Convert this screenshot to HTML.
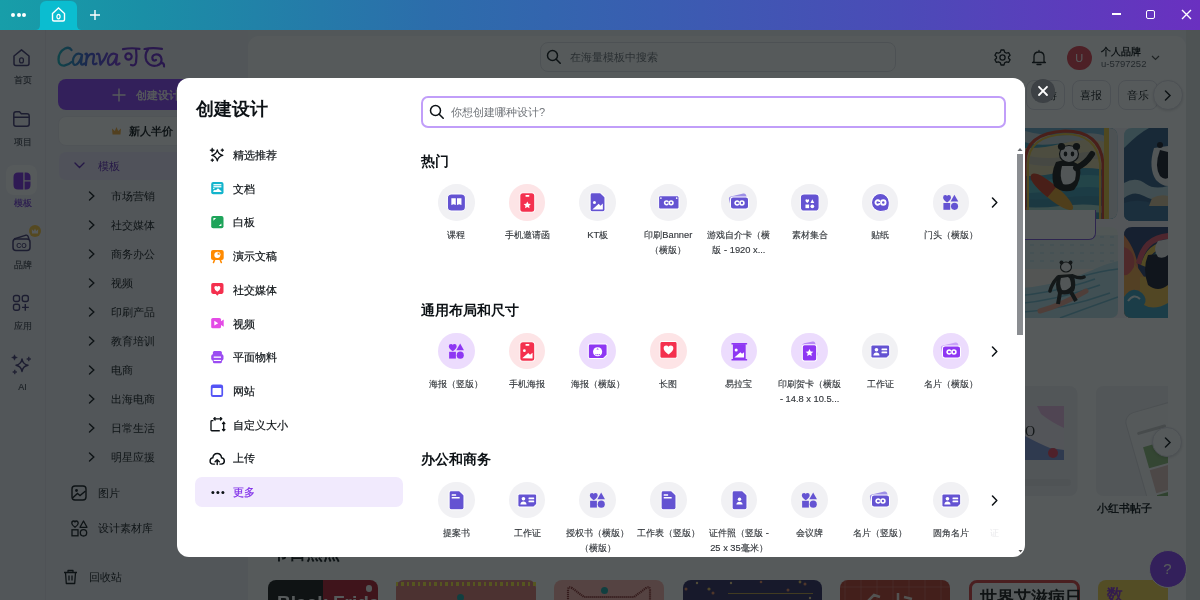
<!DOCTYPE html>
<html><head><meta charset="utf-8"><style>
*{box-sizing:border-box;margin:0;padding:0}
html,body{width:1200px;height:600px;overflow:hidden;background:#f4f4f7;font-family:"Liberation Sans",sans-serif;color:#0d1216}
.abs{position:absolute}
#titlebar{will-change:transform;position:absolute;left:0;top:0;width:1200px;height:30px;background:linear-gradient(90deg,#179ea9 0%,#1a8fa6 12%,#2c6dab 36%,#3a5db1 55%,#4b4bb7 75%,#6a30c0 100%)}
#app{will-change:transform;position:absolute;left:0;top:30px;width:1200px;height:570px;background:#f2f3f7;overflow:hidden}
#overlay{position:absolute;left:0;top:30px;width:1200px;height:570px;background:rgba(14,20,21,0.7)}
#modal{will-change:transform;position:absolute;left:177px;top:78px;width:848px;height:479px;background:#fff;border-radius:12px;overflow:hidden}
.title{font-size:18px;font-weight:bold;line-height:24px;white-space:nowrap}
.navt{font-size:11px;line-height:16px;white-space:nowrap;-webkit-text-stroke:0.2px currentColor}
.ph{font-size:11px;line-height:16px;color:#707479;white-space:nowrap}
.sec{font-size:14px;font-weight:bold;line-height:16px;white-space:nowrap}
.circ{width:36.4px;height:36.4px;border-radius:50%}
.circ svg{position:absolute;left:0;top:0}
.rl{position:absolute;left:0;width:45px;text-align:center;font-size:9px;line-height:14px;color:#3d404c;-webkit-text-stroke:0.15px currentColor}
.lab{width:70px;text-align:center;font-size:9.3px;line-height:15.5px;color:#34383d;-webkit-text-stroke:0.15px currentColor}
</style></head><body>
<div id="titlebar">
 <div class="abs" style="left:11px;top:13px;width:4px;height:4px;border-radius:50%;background:#fff"></div>
 <div class="abs" style="left:16.5px;top:13px;width:4px;height:4px;border-radius:50%;background:#fff"></div>
 <div class="abs" style="left:22px;top:13px;width:4px;height:4px;border-radius:50%;background:#fff"></div>
 <div class="abs" style="left:40px;top:1px;width:37px;height:29px;background:#0bbdd0;border-radius:6px 6px 0 0"></div>
 <svg class="abs" style="left:35px;top:25px" width="47" height="5" viewBox="0 0 47 5"><path d="M0 5 Q5 5 5 0 V5 Z M47 5 Q42 5 42 0 V5 Z" fill="#0bbdd0"/></svg>
 <svg class="abs" style="left:50px;top:6px" width="17" height="17" viewBox="0 0 17 17"><path d="M2.5 7.5 L8.5 2 L14.5 7.5 V13.5 Q14.5 15 13 15 H4 Q2.5 15 2.5 13.5 Z" fill="none" stroke="#fff" stroke-width="1.4"/><ellipse cx="8.5" cy="10.6" rx="1.6" ry="2.2" fill="none" stroke="#fff" stroke-width="1.2"/></svg>
 <svg class="abs" style="left:89px;top:9px" width="12" height="12" viewBox="0 0 12 12"><path d="M6 1V11M1 6H11" stroke="#fff" stroke-width="1.4"/></svg>
 <div class="abs" style="left:1112px;top:13px;width:9px;height:1.5px;background:#fff"></div>
 <div class="abs" style="left:1146px;top:10px;width:9px;height:9px;border:1.5px solid #fff;border-radius:2px"></div>
 <svg class="abs" style="left:1181px;top:9px" width="11" height="11" viewBox="0 0 11 11"><path d="M1 1L10 10M10 1L1 10" stroke="#fff" stroke-width="1.4"/></svg>
</div>
<div id="app"><div class="abs" style="left:0;top:0;width:45px;height:570px;background:#f1f0f8"></div>
<div class="abs" style="left:45px;top:0;width:1px;height:570px;background:#e6e4ee"></div>
<svg class="abs" style="left:12px;top:18px" width="19" height="19" viewBox="0 0 19 19"><path d="M2 8 L9.5 1.8 L17 8 V15.5 Q17 17.5 15 17.5 H4 Q2 17.5 2 15.5 Z" fill="none" stroke="#3f3470" stroke-width="1.5" stroke-linejoin="round"/><rect x="7.6" y="9.8" width="3.8" height="5" rx="1.9" fill="none" stroke="#3f3470" stroke-width="1.3"/></svg>
<div class="abs rl" style="top:43px">首页</div>
<svg class="abs" style="left:12px;top:80px" width="19" height="18" viewBox="0 0 19 18"><path d="M1.8 4 Q1.8 1.8 4 1.8 H7.5 L9.3 3.8 H15 Q17.2 3.8 17.2 6 V14 Q17.2 16.2 15 16.2 H4 Q1.8 16.2 1.8 14 Z M1.8 7.3 H17.2" fill="none" stroke="#3f3470" stroke-width="1.5" stroke-linejoin="round"/></svg>
<div class="abs rl" style="top:105px">项目</div>
<div class="abs" style="left:6px;top:134.5px;width:31px;height:30px;border-radius:8px;background:#ffffff"></div>
<svg class="abs" style="left:13px;top:142px" width="18" height="18" viewBox="0 0 18 18"><path d="M5 0.5 H10.3 V17.5 H5 Q0.5 17.5 0.5 13 V5 Q0.5 0.5 5 0.5 Z M11.6 0.5 H13 Q17.5 0.5 17.5 5 V8.3 H11.6 Z M11.6 9.6 H17.5 V13 Q17.5 17.5 13 17.5 H11.6 Z" fill="#7d2ae8"/></svg>
<div class="abs rl" style="top:166px;color:#6b2bd6">模板</div>
<svg class="abs" style="left:11px;top:202px" width="21" height="20" viewBox="0 0 21 20"><path d="M3 7 L15 3.2 Q16.5 2.8 17 4.2 L18 7" fill="none" stroke="#3f3470" stroke-width="1.4"/><rect x="2" y="7" width="17" height="11.5" rx="3" fill="none" stroke="#3f3470" stroke-width="1.5"/><text x="10.5" y="15.8" font-size="7" font-weight="bold" text-anchor="middle" fill="#3f3470" font-family="Liberation Sans">CO</text></svg>
<div class="abs" style="left:29px;top:195px;width:12px;height:12px;border-radius:50%;background:#fbc53b"></div>
<svg class="abs" style="left:31px;top:197px" width="8" height="8" viewBox="0 0 8 8"><path d="M1 6.5 L0.8 2.3 L2.8 4 L4 1.5 L5.2 4 L7.2 2.3 L7 6.5 Z" fill="#fff"/></svg>
<div class="abs rl" style="top:228px">品牌</div>
<svg class="abs" style="left:12px;top:264px" width="18" height="18" viewBox="0 0 18 18"><rect x="1.5" y="1.5" width="6" height="6" rx="2" fill="none" stroke="#3f3470" stroke-width="1.4"/><rect x="10.3" y="1.5" width="6" height="6" rx="2" fill="none" stroke="#3f3470" stroke-width="1.4"/><rect x="1.5" y="10.3" width="6" height="6" rx="2" fill="none" stroke="#3f3470" stroke-width="1.4"/><path d="M13.3 10 V16.8 M10 13.4 H16.8" stroke="#3f3470" stroke-width="1.4"/></svg>
<div class="abs rl" style="top:289px">应用</div>
<svg class="abs" style="left:11px;top:324px" width="21" height="21" viewBox="0 0 21 21"><path d="M11 5 Q11.8 10.2 17 11.2 Q11.8 12.2 11 17.5 Q10.2 12.2 5 11.2 Q10.2 10.2 11 5 Z" fill="none" stroke="#3f3470" stroke-width="1.5" stroke-linejoin="round"/><path d="M3.5 0.8 L4.3 2.8 L6.3 3.5 L4.3 4.2 L3.5 6.2 L2.7 4.2 L0.7 3.5 L2.7 2.8 Z M17.8 2.8 L18.4 4.4 L20 5 L18.4 5.6 L17.8 7.2 L17.2 5.6 L15.6 5 L17.2 4.4 Z M3.8 15.8 L4.4 17.4 L6 18 L4.4 18.6 L3.8 20.2 L3.2 18.6 L1.6 18 L3.2 17.4 Z" fill="#3f3470" stroke="#3f3470" stroke-width="0.6" stroke-linejoin="round"/></svg>
<div class="abs rl" style="top:350px">AI</div>
<div class="abs" style="left:46px;top:0;width:202px;height:570px;background:#f1f0f8"></div>
<svg class="abs" style="left:56px;top:13px" width="114" height="28" viewBox="0 0 114 28"><defs><linearGradient id="lg" gradientUnits="userSpaceOnUse" x1="2" y1="0" x2="64" y2="0"><stop offset="0" stop-color="#12b5c0"/><stop offset="0.5" stop-color="#3a52d4"/><stop offset="1" stop-color="#7a2fe0"/></linearGradient></defs>
<g fill="none" stroke="url(#lg)" stroke-width="2.3" stroke-linecap="round" stroke-linejoin="round">
<path d="M15.5 7 Q13.5 3.5 9 5.5 Q2.5 9 2.5 16.5 Q2.5 23 8.5 22.5 Q12.5 22 15.5 19"/>
<path d="M26 12 Q23 9.5 20 11.5 Q16.5 14.5 17 19.5 Q17.7 22.8 20.5 21.5 Q24 19.5 26 12 L25 20 Q25 23 28.5 20.5"/>
<path d="M29.5 11 Q31 10 31 12 L29.8 22 M30.5 16.5 Q32.5 11 36 10.8 Q38.5 10.8 37.8 14 L37 19 Q36.8 22.5 40.5 20.5"/>
<path d="M41 11 Q43 10 43.3 12.5 L44.5 21.5 Q49 16 51 10.5"/>
<path d="M61 12 Q58 9.5 55 11.5 Q51.5 14.5 52 19.5 Q52.7 22.8 55.5 21.5 Q59 19.5 61 12 L60 20 Q60 23 63.5 20.5"/>
</g>
<g fill="none" stroke="#6a24d0" stroke-width="2.2" stroke-linecap="round">
<path d="M67 6.2 Q75 4.5 83.5 5.8 M80 6 Q81 13 80 19.5 Q79 23.5 75 22"/>
<circle cx="72.5" cy="13.5" r="3.2"/>
<path d="M88.5 6 Q96 4.5 106 5.8 M92 6.5 Q88 12 90.5 18 Q94 24 101 22.5 Q106 21 105.5 16 Q104.5 11 99.5 11.5 Q95.5 12.5 96.5 16 Q97.5 18.5 100 17 M104.5 20 Q108.5 19.5 108 23.5"/>
</g></svg>
<div class="abs" style="left:58px;top:49px;width:178px;height:31px;border-radius:8px;background:#8b3dff"></div>
<svg class="abs" style="left:112px;top:58px" width="14" height="14" viewBox="0 0 14 14"><path d="M7 0.5 V13.5 M0.5 7 H13.5" stroke="#fff" stroke-width="1.4"/></svg>
<div class="abs" style="left:135.5px;top:57px;font-size:11px;line-height:16px;-webkit-text-stroke:0.35px #fff;color:#fff;white-space:nowrap">创建设计</div>
<div class="abs" style="left:58px;top:86px;width:178px;height:30px;border-radius:8px;background:#fefeff;border:1px solid #ecebf2"></div>
<svg class="abs" style="left:111px;top:96px" width="11" height="10" viewBox="0 0 11 10"><path d="M1.5 8.5 L1 2.5 L3.8 5 L5.5 1 L7.2 5 L10 2.5 L9.5 8.5 Z" fill="#f2a93b"/></svg>
<div class="abs" style="left:129px;top:93px;font-size:11px;line-height:16px;font-weight:bold;color:#0d1216;white-space:nowrap">新人半价</div>
<div class="abs" style="left:59px;top:122px;width:177px;height:28px;border-radius:7px;background:#ebe5fb"></div>
<svg class="abs" style="left:74px;top:132px" width="11" height="7" viewBox="0 0 11 7"><path d="M1 1 L5.5 5.5 L10 1" fill="none" stroke="#5d22b8" stroke-width="1.4" stroke-linecap="round"/></svg>
<div class="abs" style="left:98px;top:128px;font-size:11px;line-height:16px;color:#5d22b8;white-space:nowrap">模板</div>
<svg class="abs" style="left:88px;top:160.6px" width="8" height="10" viewBox="0 0 8 10"><path d="M1.5 1 L5.8 5 L1.5 9" fill="none" stroke="#0d1216" stroke-width="1.4" stroke-linecap="round"/></svg>
<div class="abs" style="left:110.5px;top:157.6px;font-size:11px;line-height:16px;color:#0d1216;white-space:nowrap">市场营销</div>
<svg class="abs" style="left:88px;top:189.7px" width="8" height="10" viewBox="0 0 8 10"><path d="M1.5 1 L5.8 5 L1.5 9" fill="none" stroke="#0d1216" stroke-width="1.4" stroke-linecap="round"/></svg>
<div class="abs" style="left:110.5px;top:186.7px;font-size:11px;line-height:16px;color:#0d1216;white-space:nowrap">社交媒体</div>
<svg class="abs" style="left:88px;top:218.7px" width="8" height="10" viewBox="0 0 8 10"><path d="M1.5 1 L5.8 5 L1.5 9" fill="none" stroke="#0d1216" stroke-width="1.4" stroke-linecap="round"/></svg>
<div class="abs" style="left:110.5px;top:215.7px;font-size:11px;line-height:16px;color:#0d1216;white-space:nowrap">商务办公</div>
<svg class="abs" style="left:88px;top:247.8px" width="8" height="10" viewBox="0 0 8 10"><path d="M1.5 1 L5.8 5 L1.5 9" fill="none" stroke="#0d1216" stroke-width="1.4" stroke-linecap="round"/></svg>
<div class="abs" style="left:110.5px;top:244.8px;font-size:11px;line-height:16px;color:#0d1216;white-space:nowrap">视频</div>
<svg class="abs" style="left:88px;top:276.9px" width="8" height="10" viewBox="0 0 8 10"><path d="M1.5 1 L5.8 5 L1.5 9" fill="none" stroke="#0d1216" stroke-width="1.4" stroke-linecap="round"/></svg>
<div class="abs" style="left:110.5px;top:273.9px;font-size:11px;line-height:16px;color:#0d1216;white-space:nowrap">印刷产品</div>
<svg class="abs" style="left:88px;top:305.9px" width="8" height="10" viewBox="0 0 8 10"><path d="M1.5 1 L5.8 5 L1.5 9" fill="none" stroke="#0d1216" stroke-width="1.4" stroke-linecap="round"/></svg>
<div class="abs" style="left:110.5px;top:302.9px;font-size:11px;line-height:16px;color:#0d1216;white-space:nowrap">教育培训</div>
<svg class="abs" style="left:88px;top:335.0px" width="8" height="10" viewBox="0 0 8 10"><path d="M1.5 1 L5.8 5 L1.5 9" fill="none" stroke="#0d1216" stroke-width="1.4" stroke-linecap="round"/></svg>
<div class="abs" style="left:110.5px;top:332.0px;font-size:11px;line-height:16px;color:#0d1216;white-space:nowrap">电商</div>
<svg class="abs" style="left:88px;top:364.1px" width="8" height="10" viewBox="0 0 8 10"><path d="M1.5 1 L5.8 5 L1.5 9" fill="none" stroke="#0d1216" stroke-width="1.4" stroke-linecap="round"/></svg>
<div class="abs" style="left:110.5px;top:361.1px;font-size:11px;line-height:16px;color:#0d1216;white-space:nowrap">出海电商</div>
<svg class="abs" style="left:88px;top:393.2px" width="8" height="10" viewBox="0 0 8 10"><path d="M1.5 1 L5.8 5 L1.5 9" fill="none" stroke="#0d1216" stroke-width="1.4" stroke-linecap="round"/></svg>
<div class="abs" style="left:110.5px;top:390.2px;font-size:11px;line-height:16px;color:#0d1216;white-space:nowrap">日常生活</div>
<svg class="abs" style="left:88px;top:422.2px" width="8" height="10" viewBox="0 0 8 10"><path d="M1.5 1 L5.8 5 L1.5 9" fill="none" stroke="#0d1216" stroke-width="1.4" stroke-linecap="round"/></svg>
<div class="abs" style="left:110.5px;top:419.2px;font-size:11px;line-height:16px;color:#0d1216;white-space:nowrap">明星应援</div>
<svg class="abs" style="left:71px;top:455px" width="16" height="16" viewBox="0 0 16 16"><rect x="1" y="1" width="14" height="14" rx="3" fill="none" stroke="#0d1216" stroke-width="1.4"/><circle cx="5.5" cy="5.5" r="1.4" fill="#0d1216"/><path d="M1.5 13 L6.5 8.5 L9 10.5 L14.5 6" fill="none" stroke="#0d1216" stroke-width="1.4"/></svg>
<div class="abs" style="left:98px;top:455px;font-size:11px;line-height:16px;color:#0d1216">图片</div>
<svg class="abs" style="left:71px;top:490px" width="17" height="17" viewBox="0 0 17 17"><path d="M4 7.3 Q0.8 5 0.8 3.2 Q0.8 1 2.6 1 Q3.7 1 4 2 Q4.3 1 5.4 1 Q7.2 1 7.2 3.2 Q7.2 5 4 7.3 Z M12.5 1 L16 7.3 H9 Z" fill="none" stroke="#0d1216" stroke-width="1.3" stroke-linejoin="round"/><rect x="1" y="9.8" width="6" height="6" fill="none" stroke="#0d1216" stroke-width="1.3"/><circle cx="12.5" cy="12.8" r="3.2" fill="none" stroke="#0d1216" stroke-width="1.3"/></svg>
<div class="abs" style="left:98px;top:490px;font-size:11px;line-height:16px;color:#0d1216">设计素材库</div>
<svg class="abs" style="left:63px;top:539px" width="15" height="16" viewBox="0 0 15 16"><path d="M1 3.5 H14 M5 3.5 V1.5 H10 V3.5 M2.5 3.5 L3.3 14.5 H11.7 L12.5 3.5 M6 6.5 V11.5 M9 6.5 V11.5" fill="none" stroke="#0d1216" stroke-width="1.3" stroke-linejoin="round"/></svg>
<div class="abs" style="left:89px;top:539px;font-size:11px;line-height:16px;color:#0d1216">回收站</div>
<div class="abs" style="left:248px;top:6px;width:938px;height:600px;background:#fff;border-radius:11px 11px 0 0"></div>
<div class="abs" style="left:1186px;top:0;width:14px;height:570px;background:#e4e6e8"></div>
<div class="abs" style="left:540px;top:12px;width:356px;height:30px;border-radius:8px;background:#fff;border:1px solid #e2e2e7"></div>
<svg class="abs" style="left:546px;top:19px" width="16" height="16" viewBox="0 0 16 16"><circle cx="6.5" cy="6.5" r="5" fill="none" stroke="#0d1216" stroke-width="1.5"/><path d="M10.2 10.2 L14.2 14.2" stroke="#0d1216" stroke-width="1.6" stroke-linecap="round"/></svg>
<div class="abs" style="left:570px;top:19px;font-size:11px;line-height:16px;color:#6b6f76;white-space:nowrap">在海量模板中搜索</div>
<svg class="abs" style="left:994px;top:19px" width="17" height="17" viewBox="0 0 17 17"><path d="M7 1 H10 L10.6 3.1 L12.5 4.2 L14.6 3.6 L16.1 6.2 L14.5 7.7 V9.3 L16.1 10.8 L14.6 13.4 L12.5 12.8 L10.6 13.9 L10 16 H7 L6.4 13.9 L4.5 12.8 L2.4 13.4 L0.9 10.8 L2.5 9.3 V7.7 L0.9 6.2 L2.4 3.6 L4.5 4.2 L6.4 3.1 Z" fill="none" stroke="#0d1216" stroke-width="1.3" stroke-linejoin="round"/><circle cx="8.5" cy="8.5" r="2.6" fill="none" stroke="#0d1216" stroke-width="1.3"/></svg>
<svg class="abs" style="left:1031px;top:19px" width="16" height="17" viewBox="0 0 16 17"><path d="M8 1.5 V2.5 M3 12.5 V7.5 Q3 3 8 3 Q13 3 13 7.5 V12.5 L14.5 13.5 H1.5 Z M6 15.5 H10" fill="none" stroke="#0d1216" stroke-width="1.3" stroke-linejoin="round" stroke-linecap="round"/></svg>
<div class="abs" style="left:1067px;top:15.5px;width:24.5px;height:24.5px;border-radius:50%;background:#e23d4e"></div>
<div class="abs" style="left:1067px;top:20px;width:24.5px;text-align:center;font-size:11px;line-height:16px;color:#fff">U</div>
<div class="abs" style="left:1101px;top:14.5px;font-size:9.5px;line-height:14px;font-weight:bold;color:#0d1216;white-space:nowrap">个人品牌</div>
<div class="abs" style="left:1101px;top:27px;font-size:9.5px;line-height:14px;color:#555a62;white-space:nowrap">u-5797252</div>
<svg class="abs" style="left:1151px;top:25px" width="9" height="6" viewBox="0 0 9 6"><path d="M1 1 L4.5 4.5 L8 1" fill="none" stroke="#444" stroke-width="1.2"/></svg>
<div class="abs" style="left:270px;top:49.5px;width:39px;height:30px;border-radius:8px;border:1px solid #dedde6;background:#fff"></div>
<div class="abs" style="left:270px;top:56.5px;width:39px;text-align:center;font-size:11px;line-height:16px;color:#0d1216">滑板</div>
<div class="abs" style="left:316px;top:49.5px;width:39px;height:30px;border-radius:8px;border:1px solid #dedde6;background:#fff"></div>
<div class="abs" style="left:316px;top:56.5px;width:39px;text-align:center;font-size:11px;line-height:16px;color:#0d1216">动漫</div>
<div class="abs" style="left:1026px;top:49.5px;width:39px;height:30px;border-radius:8px;border:1px solid #dedde6;background:#fff"></div>
<div class="abs" style="left:1026px;top:56.5px;width:39px;text-align:center;font-size:11px;line-height:16px;color:#0d1216">旅游</div>
<div class="abs" style="left:1071.5px;top:49.5px;width:39.5px;height:30px;border-radius:8px;border:1px solid #dedde6;background:#fff"></div>
<div class="abs" style="left:1071.5px;top:56.5px;width:39.5px;text-align:center;font-size:11px;line-height:16px;color:#0d1216">喜报</div>
<div class="abs" style="left:1118px;top:49.5px;width:39.5px;height:30px;border-radius:8px;border:1px solid #dedde6;background:#fff"></div>
<div class="abs" style="left:1118px;top:56.5px;width:39.5px;text-align:center;font-size:11px;line-height:16px;color:#0d1216">音乐</div>
<div class="abs" style="left:1152.5px;top:49.5px;width:30px;height:30px;border-radius:50%;background:#fff;border:1px solid #dedde6;box-shadow:0 1px 3px rgba(0,0,0,0.15)"></div>
<svg class="abs" style="left:1164px;top:60px" width="8" height="11" viewBox="0 0 8 11"><path d="M1.5 1 L6 5.5 L1.5 10" fill="none" stroke="#0d1216" stroke-width="1.5" stroke-linecap="round"/></svg>
<div class="abs" style="left:1000px;top:97.5px;width:168px;height:190.5px;background:#f3f2f7"></div>
<svg class="abs" style="left:1000px;top:97.5px" width="117.5" height="91" viewBox="0 0 117.5 91"><defs><clipPath id="c1"><path d="M0 0 H109 Q117.5 0 117.5 8.5 V82.5 Q117.5 91 109 91 H0 Z"/></clipPath></defs><g clip-path="url(#c1)">
<rect width="117.5" height="91" fill="#3e9ab5"/>
<path d="M0 0 H113 V12 Q80 6 50 12 Q25 17 0 12 Z" fill="#6aa8c8"/>
<path d="M25 3 Q50 10 80 6 Q95 4 105 8 V14 Q80 12 55 16 Q35 18 25 14 Z" fill="#c4cfd8"/>
<path d="M0 16 Q30 24 60 16 Q90 8 113 16 V44 Q85 36 60 44 Q30 52 0 44 Z" fill="#e2d3a6"/>
<path d="M20 26 Q50 34 75 26 Q95 20 113 28 V34 Q95 28 75 34 Q50 42 20 34 Z" fill="#c9c4b0"/>
<path d="M0 48 Q30 56 60 50 Q90 44 113 50 V62 Q90 56 60 62 Q30 68 0 62 Z" fill="#54b8c4"/>
<path d="M0 68 Q30 74 60 70 Q90 66 113 70 V91 H0 Z" fill="#3a8ca8"/>
<path d="M0 76 Q30 82 60 78 Q90 74 113 80 V86 Q85 82 60 86 Q30 90 0 84 Z" fill="#a6d6cc"/>
<path d="M25 91 V35 Q25 5 65 3 Q100 3 103 35 V91" fill="none" stroke="#d23a26" stroke-width="3"/>
<path d="M28 91 V36 Q28 8 65 6 Q97 6 100 36 V91" fill="none" stroke="#e8c23a" stroke-width="2"/>
<rect x="104" y="0" width="5" height="91" fill="#e6c23a"/>
<rect x="109" y="0" width="8.5" height="91" fill="#e2e4e6"/>
<g transform="rotate(40 52 64)"><ellipse cx="52" cy="64" rx="27" ry="7" fill="#e8a028"/><path d="M25 64 Q25 57 52 57 V71 Q25 71 25 64 Z" fill="#d23a20"/></g>
<path d="M56 34 Q50 46 54 58 Q62 66 74 62 Q82 52 80 38 Q74 32 64 32 Z" fill="#141414"/>
<path d="M62 38 Q59 48 63 56 Q70 58 75 52 Q77 44 74 38 Z" fill="#f0f0f0"/>
<path d="M76 40 Q86 36 92 26" stroke="#141414" stroke-width="6" stroke-linecap="round" fill="none"/>
<ellipse cx="69" cy="26" rx="9.5" ry="8.5" fill="#f4f4f4" stroke="#141414" stroke-width="1.2"/>
<circle cx="61.5" cy="18.5" r="3.6" fill="#141414"/><circle cx="76.5" cy="18.5" r="3.6" fill="#141414"/>
<ellipse cx="65.5" cy="26" rx="1.8" ry="2.4" fill="#141414"/><ellipse cx="72.5" cy="26" rx="1.8" ry="2.4" fill="#141414"/>
</g></svg>
<svg class="abs" style="left:1124px;top:97.5px" width="44" height="93" viewBox="0 0 44 93"><defs><clipPath id="c2"><path d="M8 0 H44 V93 H8 Q0 93 0 85 V8 Q0 0 8 0 Z"/></clipPath></defs><g clip-path="url(#c2)">
<rect width="44" height="93" fill="#9ecfdc"/>
<path d="M0 20 Q15 5 25 0 H44 V93 H0 Z" fill="#2f5d86"/>
<path d="M0 55 Q12 48 22 56 Q30 62 44 58 V70 Q30 74 20 68 Q10 62 0 70 Z" fill="#b9d7e0"/>
<path d="M0 75 Q15 70 30 76 L44 72 V93 H0 Z" fill="#3b6e9a"/>
<path d="M28 70 Q36 66 44 68 V78 H25 Z" fill="#d9c49a"/>
<path d="M30 20 Q24 40 32 52 Q38 58 44 58 V18 Z" fill="#f0f0f0"/>
<path d="M36 22 Q30 38 36 48 Q40 52 44 50 V24 Z" fill="#121424"/>
<circle cx="36" cy="17" r="3" fill="#121424"/>
</g></svg>
<svg class="abs" style="left:1000px;top:196.8px" width="118" height="91" viewBox="0 0 118 91"><defs><clipPath id="c3"><path d="M0 0 H110 Q118 0 118 8 V83 Q118 91 110 91 H0 Z"/></clipPath></defs><g clip-path="url(#c3)">
<rect width="118" height="91" fill="#eef3ef"/>
<rect x="0" y="8" width="118" height="34" fill="#dcebeb"/>
<path d="M0 10 H118 M0 18 H118 M0 26 H118 M0 34 H118" stroke="#c6dfe6" stroke-width="2" stroke-dasharray="4 6"/>
<rect x="0" y="42" width="118" height="20" fill="#f3efe6"/>
<path d="M0 62 Q50 62 90 44 Q108 36 118 34 V91 H0 Z" fill="#b7dde6"/>
<path d="M0 70 Q50 68 95 52 M0 78 Q50 76 100 58 M10 86 Q60 84 110 66 M60 91 Q90 80 118 70 M80 50 Q100 44 118 42" stroke="#6fb6cc" stroke-width="1.5" fill="none"/>
<path d="M40 84 Q62 78 86 64" stroke="#e7a08e" stroke-width="5" stroke-linecap="round"/>
<ellipse cx="66" cy="40" rx="5.5" ry="5" fill="#f5f5f5" stroke="#222" stroke-width="1.2"/>
<circle cx="61.5" cy="35.5" r="2" fill="#222"/><circle cx="70.5" cy="35.5" r="2" fill="#222"/>
<path d="M58 48 Q54 58 58 66 Q66 70 74 64 Q77 56 73 47 Z" fill="#222"/>
<path d="M61 51 Q59 58 62 63 Q68 64 71 59 Q71 52 68 50 Z" fill="#f2f2f2"/>
<path d="M58 50 Q52 56 50 64 M73 49 Q80 52 84 50" stroke="#222" stroke-width="3.5" stroke-linecap="round" fill="none"/>
<path d="M60 66 L58 77 M71 65 L76 74" stroke="#222" stroke-width="4"/>
</g></svg>
<svg class="abs" style="left:1124px;top:196.8px" width="44" height="91" viewBox="0 0 44 91"><defs><clipPath id="c4"><path d="M8 0 H44 V91 H8 Q0 91 0 83 V8 Q0 0 8 0 Z"/></clipPath></defs><g clip-path="url(#c4)">
<rect width="44" height="91" fill="#2b3c6e"/>
<path d="M0 8 Q18 30 14 60 Q10 80 0 85 Z" fill="#f08a4a"/>
<path d="M0 30 Q28 45 30 91 H0 Z" fill="#f5a848"/>
<path d="M0 20 Q12 24 10 40 Q4 50 0 48 Z" fill="#e85a5a"/>
<path d="M12 36 Q18 8 44 6 V12 Q22 14 17 38 Z" fill="#e4506a"/>
<path d="M17 38 Q22 16 44 14 V20 Q26 22 22 40 Z" fill="#f5c848"/>
<path d="M22 40 Q26 24 44 22 V28 Q30 30 27 42 Z" fill="#48b8a8"/>
<path d="M16 50 Q30 50 44 40 V91 H16 Z" fill="#f0c048"/>
<path d="M0 70 Q8 58 18 66 Q24 72 20 78 Q30 84 44 76 V91 H0 Z" fill="#3a9fc0"/>
<path d="M4 74 Q10 66 16 72" stroke="#e8f4f4" stroke-width="2" fill="none"/>
<path d="M24 28 Q18 42 24 58 Q34 66 44 58 V26 Z" fill="#161a2c"/>
<path d="M34 14 Q28 22 34 30 Q40 32 44 28 V12 Z" fill="#f0f0f0"/>
</g></svg>
<div class="abs" style="left:960px;top:180px;width:135.5px;height:30px;border-radius:0 0 7px 0;background:#fff;border-bottom:1.5px solid #7b4fd8;border-right:1.5px solid #7b4fd8"></div>
<svg class="abs" style="left:985px;top:356px" width="92.5" height="110" viewBox="0 0 92.5 110"><rect width="92.5" height="110" rx="8" fill="#f1f1f4"/>
<rect x="0" y="20" width="79" height="54" fill="#ffffff"/>
<path d="M0 20 H79 V74 H0 Z" fill="#f4eef8"/>
<path d="M52 20 H79 V42 Q66 36 56 28 Z" fill="#e9b8e4"/>
<path d="M0 74 V58 Q20 40 40 50 Q55 58 65 62 L79 64 V74 Z" fill="#7e93d8"/>
<circle cx="68" cy="67" r="5" fill="#e8405a"/>
<text x="40" y="50" font-family="Liberation Serif" font-size="14" fill="#222">O</text>
<rect x="-5" y="93" width="91" height="7" rx="3" fill="#e8e8ec"/>
</svg>
<svg class="abs" style="left:1096px;top:356px" width="72" height="110" viewBox="0 0 72 110"><defs><clipPath id="c5"><path d="M8 0 H72 V110 H8 Q0 110 0 102 V8 Q0 0 8 0 Z"/></clipPath></defs><g clip-path="url(#c5)"><rect width="72" height="110" fill="#f1f1f4"/>
<g transform="rotate(-16 60 70)"><rect x="40" y="22" width="62" height="120" rx="10" fill="#fbfbfc" stroke="#dcdce0"/>
<rect x="48" y="42" width="30" height="3" rx="1.5" fill="#ccc"/>
<rect x="50" y="58" width="40" height="22" fill="#8dbb78"/><rect x="50" y="82" width="40" height="24" fill="#e0c2bd"/><rect x="50" y="108" width="40" height="22" fill="#7fae6c"/></g>
</g></svg>
<div class="abs" style="left:1152px;top:397px;width:30px;height:30px;border-radius:50%;background:#fff;border:1px solid #dedde6;box-shadow:0 1px 3px rgba(0,0,0,0.15)"></div>
<svg class="abs" style="left:1163.5px;top:406.5px" width="8" height="11" viewBox="0 0 8 11"><path d="M1.5 1 L6 5.5 L1.5 10" fill="none" stroke="#0d1216" stroke-width="1.5" stroke-linecap="round"/></svg>
<div class="abs" style="left:1097px;top:470px;font-size:11px;line-height:16px;font-weight:bold;color:#0d1216;white-space:nowrap">小红书帖子</div>
<div class="abs" style="left:272px;top:513px;font-size:17px;line-height:22px;font-weight:bold;color:#0d1216;white-space:nowrap">节日热点</div>
<div class="abs" style="left:267.5px;top:549.5px;width:110.0px;height:40px;border-radius:8px;background:linear-gradient(90deg,#111 0 50%,#b3162a 50%)"></div>
<div class="abs" style="left:396px;top:549.5px;width:139.5px;height:40px;border-radius:8px;background:#dc7872"></div>
<div class="abs" style="left:553.5px;top:549.5px;width:110.5px;height:40px;border-radius:8px;background:#fcb2aa"></div>
<div class="abs" style="left:682.5px;top:549.5px;width:139.0px;height:40px;border-radius:8px;background:#2c2560"></div>
<div class="abs" style="left:840px;top:549.5px;width:110px;height:40px;border-radius:8px;background:#c0392b"></div>
<div class="abs" style="left:968.5px;top:549.5px;width:111.0px;height:40px;border-radius:8px;background:#fff"></div>
<div class="abs" style="left:1098px;top:549.5px;width:70px;height:40px;border-radius:8px;background:#f3d34a"></div>
<div class="abs" style="left:396px;top:552px;width:139.5px;height:4px;background:repeating-linear-gradient(90deg,#fff23a 0 2.5px,transparent 2.5px 5.5px)"></div>
<div class="abs" style="left:968.5px;top:549.5px;width:111px;height:40px;border-radius:8px;border:3px solid #d83a3a"></div>
<div class="abs" style="left:980px;top:556.5px;font-size:16.5px;line-height:20px;font-weight:bold;color:#111;white-space:nowrap">世界艾滋病日</div>
<div class="abs" style="left:277px;top:561.5px;font-size:19px;line-height:22px;font-weight:bold;color:#fff;white-space:nowrap">Black Friday</div>
<div class="abs" style="left:365.5px;top:555px;width:6.5px;height:6.5px;border-radius:50%;background:#f4f4f4"></div>
<div class="abs" style="left:456.5px;top:563.5px;width:7px;height:7px;border-radius:50%;background:#1aa5a5"></div>
<div class="abs" style="left:600.5px;top:557px;width:7px;height:7px;border-radius:50%;background:#1aa5a5"></div>
<svg class="abs" style="left:553.5px;top:549.5px" width="111" height="21" viewBox="0 0 111 21"><path d="M14 21 V10 Q14 6 18 8 L30 17 H80 L92 8 Q96 6 96 10 V21" fill="none" stroke="#8a2a2a" stroke-width="2.2" stroke-dasharray="1.2 0.8"/></svg>
<svg class="abs" style="left:840px;top:549.5px" width="110" height="21" viewBox="0 0 110 21"><g stroke="#d88a80" stroke-width="0.8" opacity="0.6"><path d="M5 0 V21 M21 0 V21 M37 0 V21 M53 0 V21 M69 0 V21 M85 0 V21 M101 0 V21 M0 7 H110"/></g><path d="M28 21 L34 15 L40 17 M58 13 V21 M64 17 L72 19" stroke="#f4e8e0" stroke-width="2.5" fill="none"/></svg>
<div class="abs" style="left:728px;top:563px;width:85px;height:1px;background:#b8963e"></div>
<svg class="abs" style="left:682.5px;top:549.5px" width="139" height="21" viewBox="0 0 139 21"><g fill="#f0d28a"><circle cx="14" cy="3" r="1.2"/><circle cx="48" cy="3" r="1.2"/><circle cx="127" cy="18" r="1.2"/></g><g fill="#e8885a"><circle cx="3" cy="9" r="1.5"/><circle cx="30" cy="13" r="1.5"/><circle cx="105" cy="10" r="1.5"/><circle cx="122" cy="4" r="1.5"/><circle cx="78" cy="2" r="1.3"/></g><g fill="#e8c05a"><circle cx="26" cy="9" r="1.6"/><circle cx="117" cy="2" r="1.4"/></g></svg>
<div class="abs" style="left:1107px;top:555px;font-size:16px;line-height:20px;font-weight:bold;color:#8b2fd0;white-space:nowrap">数</div>
<div class="abs" style="left:1148.5px;top:519.5px;width:38px;height:38px;border-radius:50%;background:#8b3dff;border:1px solid #ffffff"></div>
<div class="abs" style="left:1149px;top:529px;width:37px;text-align:center;font-size:15px;line-height:20px;color:#fff">?</div></div>
<div id="overlay"></div>
<div id="modal">
<div class="abs title" style="left:19px;top:19px">创建设计</div>
<svg class="abs" style="left:32px;top:68.5px" width="17" height="17" viewBox="0 0 17 17"><path d="M8.3 2.8 Q9.2 7.4 13.8 8.3 Q9.2 9.2 8.3 13.8 Q7.4 9.2 2.8 8.3 Q7.4 7.4 8.3 2.8 Z" fill="none" stroke="#0d1216" stroke-width="1.3" stroke-linejoin="round"/><path d="M3.2 0.8 Q3.5 2.9 5.6 3.2 Q3.5 3.5 3.2 5.6 Q2.9 3.5 0.8 3.2 Q2.9 2.9 3.2 0.8 Z" fill="#0d1216" stroke="#0d1216" stroke-width="0.5" stroke-linejoin="round"/><path d="M13.3 1.6 Q13.5 3 14.9 3.2 Q13.5 3.4 13.3 4.8 Q13.1 3.4 11.7 3.2 Q13.1 3 13.3 1.6 Z" fill="#0d1216" stroke="#0d1216" stroke-width="0.6" stroke-linejoin="round"/><path d="M3.3 11.6 Q3.5 13 4.9 13.2 Q3.5 13.4 3.3 14.8 Q3.1 13.4 1.7 13.2 Q3.1 13 3.3 11.6 Z" fill="#0d1216" stroke="#0d1216" stroke-width="0.6" stroke-linejoin="round"/></svg>
<div class="abs navt" style="left:56px;top:69.0px;color:#0d1216">精选推荐</div>
<svg class="abs" style="left:32px;top:102.2px" width="17" height="17" viewBox="0 0 17 17"><g transform="translate(1.9,1.5)"><rect x="0.3" y="0.5" width="12.3" height="12.3" rx="2" fill="#13b4cc"/><rect x="2.5" y="2.6" width="8" height="1.3" fill="#fff"/><rect x="2.5" y="4.6" width="8" height="1.3" fill="#fff"/><circle cx="2.9" cy="7" r="0.7" fill="#fff"/><path d="M2.4 10.6 V9.2 L4 8.3 L5 8.8 L7.1 6.8 L9.3 8.8 L10.5 9.4 V10.6 Z" fill="#fff"/></g></svg>
<div class="abs navt" style="left:56px;top:102.7px;color:#0d1216">文档</div>
<svg class="abs" style="left:32px;top:135.9px" width="17" height="17" viewBox="0 0 17 17"><g transform="translate(1.9,1.5)"><rect x="0.3" y="0.5" width="12.3" height="12.3" rx="2" fill="#1ea45a"/><path d="M2.5 2.6 L5.2 2.6 L2.5 5.3 Z M10.5 10.6 L7.8 10.6 L10.5 7.9 Z" fill="#fff"/></g></svg>
<div class="abs navt" style="left:56px;top:136.4px;color:#0d1216">白板</div>
<svg class="abs" style="left:32px;top:169.6px" width="17" height="17" viewBox="0 0 17 17"><g transform="translate(1.9,1.5)"><rect x="0.1" y="0.5" width="12.7" height="10" rx="2" fill="#ff8a00"/><path d="M3.8 10 L2.6 13 M9.2 10 L10.4 13" stroke="#ff8a00" stroke-width="1.6" stroke-linecap="round"/><circle cx="6.4" cy="5.5" r="3" fill="#fff"/><path d="M6.4 5.5 V2.5 A3 3 0 0 1 9.4 5.5 Z" fill="#ff8a00" stroke="#fff" stroke-width="0.6"/></g></svg>
<div class="abs navt" style="left:56px;top:170.1px;color:#0d1216">演示文稿</div>
<svg class="abs" style="left:32px;top:203.3px" width="17" height="17" viewBox="0 0 17 17"><g transform="translate(1.9,1.5)"><path d="M2.1 0.5 H10.8 Q12.6 0.5 12.6 2.3 V9.6 Q12.6 11.4 10.8 11.4 H8 L6.4 13.3 L4.8 11.4 H2.1 Q0.3 11.4 0.3 9.6 V2.3 Q0.3 0.5 2.1 0.5 Z" fill="#f4304e"/><path d="M3.4 5.2 Q3.4 3.4 5 3.4 Q6 3.4 6.45 4.3 Q6.9 3.4 7.9 3.4 Q9.5 3.4 9.5 5.2 Q9.5 7.2 6.45 9.2 Q3.4 7.2 3.4 5.2 Z" fill="#fff"/></g></svg>
<div class="abs navt" style="left:56px;top:203.8px;color:#0d1216">社交媒体</div>
<svg class="abs" style="left:32px;top:237.0px" width="17" height="17" viewBox="0 0 17 17"><g transform="translate(1.9,1.5)"><rect x="0.3" y="1.5" width="9.8" height="10.3" rx="1.6" fill="#e44be6"/><path d="M9.8 5 L12.8 3 V10.3 L9.8 8.3 Z" fill="#e44be6"/><path d="M3.4 4.3 L7.3 6.65 L3.4 9 Z" fill="#fff"/></g></svg>
<div class="abs navt" style="left:56px;top:237.5px;color:#0d1216">视频</div>
<svg class="abs" style="left:32px;top:270.7px" width="17" height="17" viewBox="0 0 17 17"><g transform="translate(1.9,1.5)"><rect x="2" y="0.5" width="9" height="4" rx="1.5" fill="#9b4cf2"/><rect x="0.3" y="3.5" width="12.3" height="6.8" rx="2.5" fill="#9b4cf2"/><rect x="2" y="8.5" width="9" height="4.3" rx="1.5" fill="#9b4cf2"/><rect x="2.8" y="6" width="7.3" height="1.3" fill="#fff"/><rect x="2.8" y="9.4" width="7.3" height="1.1" fill="#fff"/></g></svg>
<div class="abs navt" style="left:56px;top:271.2px;color:#0d1216">平面物料</div>
<svg class="abs" style="left:32px;top:304.4px" width="17" height="17" viewBox="0 0 17 17"><g transform="translate(1.5,2.1)"><rect x="0.3" y="0.5" width="12.3" height="12.3" rx="2.2" fill="#5454f5"/><rect x="2" y="4" width="8.9" height="6.9" rx="0.6" fill="#fff"/></g></svg>
<div class="abs navt" style="left:56px;top:304.9px;color:#0d1216">网站</div>
<svg class="abs" style="left:32px;top:338.1px" width="17" height="17" viewBox="0 0 17 17"><g transform="translate(1.2,1.3)"><path d="M3.2 3.3 H1.6 Q0.8 3.3 0.8 4.1 V12.6 Q0.8 13.4 1.6 13.4 H9.6" fill="none" stroke="#0d1216" stroke-width="1.35"/><path d="M3.6 1.5 H11.6 M3.6 1.5 L4.9 0.3 M3.6 1.5 L4.9 2.7 M11.6 1.5 L10.3 0.3 M11.6 1.5 L10.3 2.7 M13.5 5 V13.5 M13.5 5 L12.3 6.3 M13.5 5 L14.7 6.3 M13.5 13.5 L12.3 12.2 M13.5 13.5 L14.7 12.2" fill="none" stroke="#0d1216" stroke-width="1.3" stroke-linecap="round" stroke-linejoin="round"/></g></svg>
<div class="abs navt" style="left:56px;top:338.6px;color:#0d1216">自定义大小</div>
<svg class="abs" style="left:32px;top:371.8px" width="17" height="17" viewBox="0 0 17 17"><g transform="translate(0.5,1.8)"><path d="M5 12.3 H3.7 Q0.6 12.3 0.6 9.2 Q0.6 6.4 3.3 6 Q3.9 1.6 7.7 1.6 Q11.5 1.6 12.1 6 Q14.8 6.4 14.8 9.2 Q14.8 12.3 11.7 12.3 H10.4" fill="none" stroke="#0d1216" stroke-width="1.45" stroke-linecap="round"/><path d="M7.7 12.6 V8 M5.6 10 L7.7 7.9 L9.8 10" fill="none" stroke="#0d1216" stroke-width="1.45" stroke-linecap="round" stroke-linejoin="round"/></g></svg>
<div class="abs navt" style="left:56px;top:372.3px;color:#0d1216">上传</div>
<div class="abs" style="left:18px;top:399.0px;width:208px;height:30px;border-radius:7px;background:#f1eafd"></div>
<svg class="abs" style="left:32px;top:405.5px" width="17" height="17" viewBox="0 0 17 17"><g transform="translate(1.9,1.5)"><circle cx="2" cy="7" r="1.5" fill="#0d1216"/><circle cx="7" cy="7" r="1.5" fill="#0d1216"/><circle cx="12" cy="7" r="1.5" fill="#0d1216"/></g></svg>
<div class="abs navt" style="left:56px;top:406.0px;color:#7d2ae8">更多</div>
<div class="abs" style="left:244px;top:18px;width:585px;height:31.5px;border:2px solid #c19ef9;border-radius:7px"></div>
<svg class="abs" style="left:252px;top:26px" width="16" height="16" viewBox="0 0 16 16"><circle cx="6.5" cy="6.5" r="5" fill="none" stroke="#0d1216" stroke-width="1.5"/><path d="M10.2 10.2 L14.2 14.2" stroke="#0d1216" stroke-width="1.6" stroke-linecap="round"/></svg>
<div class="abs ph" style="left:274px;top:26px">你想创建哪种设计?</div>
<div class="abs sec" style="left:244px;top:75px">热门</div>
<div class="abs circ" style="left:261.20px;top:106.20px;background:#f1f1f4"><svg width="36.4" height="36.4" viewBox="0 0 36 36"><rect x="9.3" y="9.8" width="17.8" height="17" rx="4" fill="#6453d2" stroke="#fff" stroke-width="1"/><path d="M13.2 14 H17.6 V20.8 L15.4 20 L13.2 20.8 Z M18.8 14 H23.2 V20.8 L21 20 L18.8 20.8 Z" fill="#fff"/></svg></div>
<div class="abs lab" style="left:244.40px;top:149.90px">课程</div>
<div class="abs circ" style="left:331.84px;top:106.20px;background:#fde4e6"><svg width="36.4" height="36.4" viewBox="0 0 36 36"><rect x="10.7" y="8.7" width="14.8" height="19.3" rx="3" fill="#f4304e" stroke="#fff" stroke-width="1"/><rect x="16.2" y="11" width="4" height="1.5" rx="0.75" fill="#fff"/><path d="M18.1 17.2 L19.2 19.5 L21.7 19.8 L19.9 21.5 L20.3 24 L18.1 22.8 L15.9 24 L16.3 21.5 L14.5 19.8 L17 19.5 Z" fill="#fff"/></svg></div>
<div class="abs lab" style="left:315.04px;top:149.90px">手机邀请函</div>
<div class="abs circ" style="left:402.48px;top:106.20px;background:#f1f1f4"><svg width="36.4" height="36.4" viewBox="0 0 36 36"><path d="M11 10.6 Q11 8.7 12.9 8.7 H21.3 L25.7 13 V25.5 Q25.7 27.4 23.8 27.4 H12.9 Q11 27.4 11 25.5 Z" fill="#6453d2" stroke="#fff" stroke-width="1"/><circle cx="15.3" cy="18.3" r="1.5" fill="#fff"/><path d="M13.2 25.3 L19.5 19.6 L21.2 21.4 L23.6 19.3 V25.3 Z" fill="#fff"/></svg></div>
<div class="abs lab" style="left:385.68px;top:149.90px">KT板</div>
<div class="abs circ" style="left:473.12px;top:106.20px;background:#f1f1f4"><svg width="36.4" height="36.4" viewBox="0 0 36 36"><path d="M8.5 13.2 Q8.5 11.7 10 11.7 H27.2 Q28.7 11.7 28.7 13.2 V23.2 Q28.7 24.7 27.2 24.7 H10 Q8.5 24.7 8.5 23.2 Z" fill="#6453d2" stroke="#fff" stroke-width="1"/><circle cx="10.8" cy="14" r="0.8" fill="#fff"/><circle cx="26.4" cy="14" r="0.8" fill="#fff"/><path d="M17.72 17.41 A1.85 1.85 0 1 0 17.72 19.79" fill="none" stroke="#fff" stroke-width="1.55" stroke-linecap="round"/><circle cx="20.900000000000002" cy="18.6" r="1.85" fill="none" stroke="#fff" stroke-width="1.55"/></svg></div>
<div class="abs lab" style="left:456.32px;top:149.90px">印刷Banner<br>（横版）</div>
<div class="abs circ" style="left:543.76px;top:106.20px;background:#f1f1f4"><svg width="36.4" height="36.4" viewBox="0 0 36 36"><g transform="rotate(-14 18 17)"><rect x="8.6" y="10.6" width="17.5" height="11.8" rx="2.4" fill="#9d8fe6"/></g><rect x="9.4" y="12.8" width="17.8" height="12" rx="2.5" fill="#6453d2" stroke="#fff" stroke-width="1"/><path d="M17.37 17.55 A1.9425000000000001 1.9425000000000001 0 1 0 17.37 20.05" fill="none" stroke="#fff" stroke-width="1.6275000000000002" stroke-linecap="round"/><circle cx="20.715" cy="18.8" r="1.9425000000000001" fill="none" stroke="#fff" stroke-width="1.6275000000000002"/></svg></div>
<div class="abs lab" style="left:526.96px;top:149.90px">游戏自介卡（横<br>版 - 1920 x...</div>
<div class="abs circ" style="left:614.40px;top:106.20px;background:#f1f1f4"><svg width="36.4" height="36.4" viewBox="0 0 36 36"><rect x="9.3" y="9.8" width="18.5" height="17" rx="3.6" fill="#6453d2" stroke="#fff" stroke-width="1"/><g transform="translate(0,0.8)"><path d="M14.3 15.5 Q14.3 14.4 15.3 14.4 Q15.9 14.4 16.1 15 Q16.3 14.4 16.9 14.4 Q17.9 14.4 17.9 15.5 Q17.9 16.6 16.1 18.1 Q14.3 16.6 14.3 15.5 Z" fill="#fff"/><path d="M21.1 14.3 L23 17.9 H19.2 Z" fill="#fff"/><rect x="14.3" y="19.5" width="3.6" height="3.6" fill="#fff"/><circle cx="21.1" cy="21.3" r="1.85" fill="#fff"/></g></svg></div>
<div class="abs lab" style="left:597.60px;top:149.90px">素材集合</div>
<div class="abs circ" style="left:685.04px;top:106.20px;background:#f1f1f4"><svg width="36.4" height="36.4" viewBox="0 0 36 36"><path d="M18.2 9.5 A8.8 8.8 0 0 1 27 18.3 Q27 23.5 25.3 25.6 Q23 27.1 18.2 27.1 A8.8 8.8 0 0 1 18.2 9.5 Z" fill="#6453d2" stroke="#fff" stroke-width="1"/><path d="M17.24 16.87 A2.22 2.22 0 1 0 17.24 19.73" fill="none" stroke="#fff" stroke-width="1.8599999999999999" stroke-linecap="round"/><circle cx="21.060000000000002" cy="18.3" r="2.22" fill="none" stroke="#fff" stroke-width="1.8599999999999999"/></svg></div>
<div class="abs lab" style="left:668.24px;top:149.90px">贴纸</div>
<div class="abs circ" style="left:755.68px;top:106.20px;background:#f1f1f4"><svg width="36.4" height="36.4" viewBox="0 0 36 36"><g transform="translate(-1,-2)"><path d="M11 15.3 Q11 13 13.2 13 Q14.6 13 14.9 14 Q15.2 13 16.6 13 Q18.8 13 18.8 15.3 Q18.8 17.7 14.9 20.2 Q11 17.7 11 15.3 Z" fill="#6453d2"/><path d="M22.2 12.6 L26 19.2 H18.4 Z" fill="#6453d2"/><rect x="11.3" y="20.8" width="6.7" height="6.7" fill="#6453d2"/><circle cx="22.3" cy="24.1" r="3.5" fill="#6453d2"/></g></svg></div>
<div class="abs lab" style="left:738.88px;top:149.90px">门头（横版）</div>
<div class="abs" style="left:801px;top:102.4px;width:34px;height:80px;background:linear-gradient(90deg,rgba(255,255,255,0.6),#fff 40%)"></div>
<svg class="abs" style="left:813px;top:119.4px" width="9" height="11" viewBox="0 0 9 11"><path d="M2.5 1 L6.8 5.5 L2.5 10" fill="none" stroke="#0d1216" stroke-width="1.5" stroke-linecap="round" stroke-linejoin="round"/></svg>
<div class="abs sec" style="left:244px;top:224px">通用布局和尺寸</div>
<div class="abs circ" style="left:261.20px;top:255.00px;background:#ecdcfd"><svg width="36.4" height="36.4" viewBox="0 0 36 36"><g transform="translate(-0.3,-2.2)"><path d="M11 15.3 Q11 13 13.2 13 Q14.6 13 14.9 14 Q15.2 13 16.6 13 Q18.8 13 18.8 15.3 Q18.8 17.7 14.9 20.2 Q11 17.7 11 15.3 Z" fill="#8e37f3"/><path d="M22.2 12.6 L26 19.2 H18.4 Z" fill="#8e37f3"/><rect x="11.3" y="20.8" width="6.7" height="6.7" fill="#8e37f3"/><circle cx="22.3" cy="24.1" r="3.5" fill="#8e37f3"/></g></svg></div>
<div class="abs lab" style="left:244.40px;top:298.70px">海报（竖版）</div>
<div class="abs circ" style="left:331.84px;top:255.00px;background:#fde4e6"><svg width="36.4" height="36.4" viewBox="0 0 36 36"><rect x="10.7" y="8.7" width="14.8" height="19.3" rx="3" fill="#f4304e" stroke="#fff" stroke-width="1"/><rect x="16.2" y="11" width="4" height="1.5" rx="0.75" fill="#fff"/><circle cx="15.2" cy="17.5" r="1.4" fill="#fff"/><path d="M13 25 L19 19.8 L20.8 21.5 L23.3 19.5 V25.2 Z" fill="#fff"/></svg></div>
<div class="abs lab" style="left:315.04px;top:298.70px">手机海报</div>
<div class="abs circ" style="left:402.48px;top:255.00px;background:#ecdcfd"><svg width="36.4" height="36.4" viewBox="0 0 36 36"><path d="M10.8 11 H26.2 Q27.8 11 27.8 12.6 V21.5 L24 25.3 H10.8 Q9.2 25.3 9.2 23.7 V12.6 Q9.2 11 10.8 11 Z" fill="#8e37f3" stroke="#fff" stroke-width="1"/><rect x="13.9" y="14" width="9" height="9" rx="4.3" fill="#fff"/><path d="M17.2 16.3 L18.4 15 L19.6 16.3 Z" fill="#8e37f3"/><rect x="16.2" y="21" width="1.2" height="0.9" fill="#8e37f3"/><rect x="17.9" y="21" width="1.2" height="0.9" fill="#8e37f3"/><rect x="19.6" y="21" width="1.2" height="0.9" fill="#8e37f3"/></svg></div>
<div class="abs lab" style="left:385.68px;top:298.70px">海报（横版）</div>
<div class="abs circ" style="left:473.12px;top:255.00px;background:#fde4e6"><svg width="36.4" height="36.4" viewBox="0 0 36 36"><rect x="9.8" y="8.5" width="17" height="16.5" rx="1.8" fill="#f4304e" stroke="#fff" stroke-width="1"/><path d="M13.5 15 Q13.5 12.3 16 12.3 Q17.5 12.3 18.3 13.6 Q19.1 12.3 20.6 12.3 Q23.1 12.3 23.1 15 Q23.1 17.8 18.3 21.2 Q13.5 17.8 13.5 15 Z" fill="#fff"/></svg></div>
<div class="abs lab" style="left:456.32px;top:298.70px">长图</div>
<div class="abs circ" style="left:543.76px;top:255.00px;background:#ecdcfd"><svg width="36.4" height="36.4" viewBox="0 0 36 36"><rect x="10.3" y="9.8" width="15.6" height="1.6" rx="0.5" fill="#8e37f3"/><rect x="10.3" y="25.7" width="15.6" height="1.6" rx="0.5" fill="#8e37f3"/><rect x="11.8" y="11" width="12.6" height="15" fill="#8e37f3"/><circle cx="15" cy="16.8" r="1.5" fill="#fff"/><path d="M13.2 24.2 L19.2 19 L20.8 20.6 L22.8 19 V24.2 Z" fill="#fff"/></svg></div>
<div class="abs lab" style="left:526.96px;top:298.70px">易拉宝</div>
<div class="abs circ" style="left:614.40px;top:255.00px;background:#ecdcfd"><svg width="36.4" height="36.4" viewBox="0 0 36 36"><g transform="rotate(-12 18 18)"><rect x="12.5" y="9.3" width="13" height="15" rx="2.2" fill="#b98af6"/></g><rect x="11.2" y="11.6" width="14.2" height="16" rx="2.2" fill="#8e37f3" stroke="#fff" stroke-width="1"/><path d="M18.3 15.8 L19.5 18.2 L22.1 18.5 L20.1 20.2 L20.6 22.8 L18.3 21.5 L16 22.8 L16.5 20.2 L14.5 18.5 L17.1 18.2 Z" fill="#fff"/></svg></div>
<div class="abs lab" style="left:597.60px;top:298.70px">印刷贺卡（横版<br>- 14.8 x 10.5...</div>
<div class="abs circ" style="left:685.04px;top:255.00px;background:#f1f1f4"><svg width="36.4" height="36.4" viewBox="0 0 36 36"><path d="M8.8 13.4 Q8.8 11.8 10.4 11.8 H25.8 Q27.4 11.8 27.4 13.4 V21.8 L24.4 24.8 H10.4 Q8.8 24.8 8.8 23.2 Z" fill="#6453d2" stroke="#fff" stroke-width="1"/><circle cx="14.3" cy="16.6" r="1.8" fill="#fff"/><path d="M11.2 22.3 Q11.5 19.3 14.3 19.3 Q17.1 19.3 17.4 22.3 Z" fill="#fff"/><rect x="19.3" y="15.4" width="5.6" height="1.6" rx="0.5" fill="#fff"/><rect x="19.3" y="18.4" width="5.6" height="1.6" rx="0.5" fill="#fff"/></svg></div>
<div class="abs lab" style="left:668.24px;top:298.70px">工作证</div>
<div class="abs circ" style="left:755.68px;top:255.00px;background:#ecdcfd"><svg width="36.4" height="36.4" viewBox="0 0 36 36"><g transform="rotate(-14 18 17)"><rect x="8.6" y="10.6" width="17.5" height="11.8" rx="2.4" fill="#c9a2f8"/></g><rect x="9.4" y="12.8" width="17.8" height="12" rx="2.5" fill="#8e37f3" stroke="#fff" stroke-width="1"/><path d="M17.37 17.55 A1.9425000000000001 1.9425000000000001 0 1 0 17.37 20.05" fill="none" stroke="#fff" stroke-width="1.6275000000000002" stroke-linecap="round"/><circle cx="20.715" cy="18.8" r="1.9425000000000001" fill="none" stroke="#fff" stroke-width="1.6275000000000002"/></svg></div>
<div class="abs lab" style="left:738.88px;top:298.70px">名片（横版）</div>
<div class="abs" style="left:801px;top:251.2px;width:34px;height:80px;background:linear-gradient(90deg,rgba(255,255,255,0.6),#fff 40%)"></div>
<svg class="abs" style="left:813px;top:268.2px" width="9" height="11" viewBox="0 0 9 11"><path d="M2.5 1 L6.8 5.5 L2.5 10" fill="none" stroke="#0d1216" stroke-width="1.5" stroke-linecap="round" stroke-linejoin="round"/></svg>
<div class="abs sec" style="left:244px;top:373px">办公和商务</div>
<div class="abs circ" style="left:261.20px;top:404.00px;background:#f1f1f4"><svg width="36.4" height="36.4" viewBox="0 0 36 36"><path d="M11 10.6 Q11 8.7 12.9 8.7 H21.3 L25.7 13 V25.5 Q25.7 27.4 23.8 27.4 H12.9 Q11 27.4 11 25.5 Z" fill="#6453d2" stroke="#fff" stroke-width="1"/><rect x="13.5" y="12" width="4.5" height="1.5" rx="0.5" fill="#fff"/><rect x="13.5" y="14.8" width="8" height="1.5" rx="0.5" fill="#fff"/></svg></div>
<div class="abs lab" style="left:244.40px;top:447.70px">提案书</div>
<div class="abs circ" style="left:331.84px;top:404.00px;background:#f1f1f4"><svg width="36.4" height="36.4" viewBox="0 0 36 36"><path d="M8.8 13.4 Q8.8 11.8 10.4 11.8 H25.8 Q27.4 11.8 27.4 13.4 V21.8 L24.4 24.8 H10.4 Q8.8 24.8 8.8 23.2 Z" fill="#6453d2" stroke="#fff" stroke-width="1"/><circle cx="14.3" cy="16.6" r="1.8" fill="#fff"/><path d="M11.2 22.3 Q11.5 19.3 14.3 19.3 Q17.1 19.3 17.4 22.3 Z" fill="#fff"/><rect x="19.3" y="15.4" width="5.6" height="1.6" rx="0.5" fill="#fff"/><rect x="19.3" y="18.4" width="5.6" height="1.6" rx="0.5" fill="#fff"/></svg></div>
<div class="abs lab" style="left:315.04px;top:447.70px">工作证</div>
<div class="abs circ" style="left:402.48px;top:404.00px;background:#f1f1f4"><svg width="36.4" height="36.4" viewBox="0 0 36 36"><g transform="translate(-0.3,-2.2)"><path d="M11 15.3 Q11 13 13.2 13 Q14.6 13 14.9 14 Q15.2 13 16.6 13 Q18.8 13 18.8 15.3 Q18.8 17.7 14.9 20.2 Q11 17.7 11 15.3 Z" fill="#6453d2"/><path d="M22.2 12.6 L26 19.2 H18.4 Z" fill="#6453d2"/><rect x="11.3" y="20.8" width="6.7" height="6.7" fill="#6453d2"/><circle cx="22.3" cy="24.1" r="3.5" fill="#6453d2"/></g></svg></div>
<div class="abs lab" style="left:385.68px;top:447.70px">授权书（横版）<br>（横版）</div>
<div class="abs circ" style="left:473.12px;top:404.00px;background:#f1f1f4"><svg width="36.4" height="36.4" viewBox="0 0 36 36"><path d="M11 10.6 Q11 8.7 12.9 8.7 H21.3 L25.7 13 V25.5 Q25.7 27.4 23.8 27.4 H12.9 Q11 27.4 11 25.5 Z" fill="#6453d2" stroke="#fff" stroke-width="1"/><rect x="13.5" y="12" width="4.5" height="1.5" rx="0.5" fill="#fff"/><rect x="13.5" y="14.8" width="8" height="1.5" rx="0.5" fill="#fff"/></svg></div>
<div class="abs lab" style="left:456.32px;top:447.70px">工作表（竖版）</div>
<div class="abs circ" style="left:543.76px;top:404.00px;background:#f1f1f4"><svg width="36.4" height="36.4" viewBox="0 0 36 36"><path d="M11 10.6 Q11 8.7 12.9 8.7 H21.3 L25.7 13 V25.5 Q25.7 27.4 23.8 27.4 H12.9 Q11 27.4 11 25.5 Z" fill="#6453d2" stroke="#fff" stroke-width="1"/><circle cx="18.3" cy="17" r="1.7" fill="#fff"/><path d="M15.2 22.3 Q15.5 19.6 18.3 19.6 Q21.1 19.6 21.4 22.3 Z" fill="#fff"/></svg></div>
<div class="abs lab" style="left:526.96px;top:447.70px">证件照（竖版 -<br>25 x 35毫米）</div>
<div class="abs circ" style="left:614.40px;top:404.00px;background:#f1f1f4"><svg width="36.4" height="36.4" viewBox="0 0 36 36"><g transform="translate(-0.3,-2.2)"><path d="M11 15.3 Q11 13 13.2 13 Q14.6 13 14.9 14 Q15.2 13 16.6 13 Q18.8 13 18.8 15.3 Q18.8 17.7 14.9 20.2 Q11 17.7 11 15.3 Z" fill="#6453d2"/><path d="M22.2 12.6 L26 19.2 H18.4 Z" fill="#6453d2"/><rect x="11.3" y="20.8" width="6.7" height="6.7" fill="#6453d2"/><circle cx="22.3" cy="24.1" r="3.5" fill="#6453d2"/></g></svg></div>
<div class="abs lab" style="left:597.60px;top:447.70px">会议牌</div>
<div class="abs circ" style="left:685.04px;top:404.00px;background:#f1f1f4"><svg width="36.4" height="36.4" viewBox="0 0 36 36"><g transform="rotate(-14 18 17)"><rect x="8.6" y="10.6" width="17.5" height="11.8" rx="2.4" fill="#9d8fe6"/></g><rect x="9.4" y="12.8" width="17.8" height="12" rx="2.5" fill="#6453d2" stroke="#fff" stroke-width="1"/><path d="M17.37 17.55 A1.9425000000000001 1.9425000000000001 0 1 0 17.37 20.05" fill="none" stroke="#fff" stroke-width="1.6275000000000002" stroke-linecap="round"/><circle cx="20.715" cy="18.8" r="1.9425000000000001" fill="none" stroke="#fff" stroke-width="1.6275000000000002"/></svg></div>
<div class="abs lab" style="left:668.24px;top:447.70px">名片（竖版）</div>
<div class="abs circ" style="left:755.68px;top:404.00px;background:#f1f1f4"><svg width="36.4" height="36.4" viewBox="0 0 36 36"><path d="M8.8 13.4 Q8.8 11.8 10.4 11.8 H25.8 Q27.4 11.8 27.4 13.4 V21.8 L24.4 24.8 H10.4 Q8.8 24.8 8.8 23.2 Z" fill="#6453d2" stroke="#fff" stroke-width="1"/><circle cx="14.3" cy="16.6" r="1.8" fill="#fff"/><path d="M11.2 22.3 Q11.5 19.3 14.3 19.3 Q17.1 19.3 17.4 22.3 Z" fill="#fff"/><rect x="19.3" y="15.4" width="5.6" height="1.6" rx="0.5" fill="#fff"/><rect x="19.3" y="18.4" width="5.6" height="1.6" rx="0.5" fill="#fff"/></svg></div>
<div class="abs lab" style="left:738.88px;top:447.70px">圆角名片</div>
<div class="abs" style="left:801px;top:400.2px;width:34px;height:80px;background:linear-gradient(90deg,rgba(255,255,255,0.6),#fff 40%)"></div>
<svg class="abs" style="left:813px;top:417.2px" width="9" height="11" viewBox="0 0 9 11"><path d="M2.5 1 L6.8 5.5 L2.5 10" fill="none" stroke="#0d1216" stroke-width="1.5" stroke-linecap="round" stroke-linejoin="round"/></svg>
<div class="abs" style="left:813px;top:448px;font-size:9.3px;line-height:15px;color:#e9e9ec">证</div>
<svg class="abs" style="left:841px;top:471px" width="5" height="4" viewBox="0 0 5 4"><path d="M0.5 1 L4.5 1 L2.5 3.5 Z" fill="#555"/></svg>
<div class="abs" style="left:840px;top:76px;width:6px;height:181px;background:#8a8d91"></div>
<svg class="abs" style="left:840px;top:69px" width="6" height="5" viewBox="0 0 6 5"><path d="M0.5 4 L3 1 L5.5 4 Z" fill="#6a6d71"/></svg>
</div>
<div class="abs" style="left:1031px;top:79px;width:24px;height:24px;border-radius:50%;background:#3d4145"></div>
<svg class="abs" style="left:1037px;top:85px" width="12" height="12" viewBox="0 0 12 12"><path d="M2 1.8 L10 10 M10 1.8 L2 10" stroke="#fff" stroke-width="1.8" stroke-linecap="round"/></svg>
</body></html>
